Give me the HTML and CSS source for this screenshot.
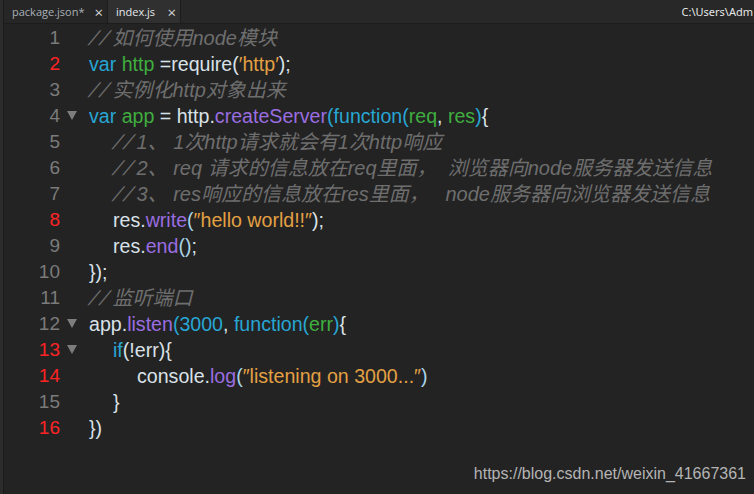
FILE: index.html
```html
<!DOCTYPE html>
<html lang="zh-CN">
<head>
<meta charset="utf-8">
<title>index.js</title>
<link rel="stylesheet" href="styles.css">
</head>
<body>
<div class="window">
  <div class="side"></div>
  <div class="main">
    <div class="tabbar">
      <div class="tab">package.json*<span class="x">×</span></div>
      <div class="tab active">index.js<span class="x">×</span></div>
      <div class="spacer"></div>
      <div class="path">C:\Users\Adm</div>
    </div>
    <div class="editor">
      <div class="line"><span class="ln">1</span><span class="fold"></span><span class="code"><span class="c"><span class="sl">//</span>如何使用node模块</span></span></div>
      <div class="line"><span class="ln red">2</span><span class="fold"></span><span class="code"><span class="k">var</span> <span class="v">http</span> =require(<span class="s">′http′</span>);</span></div>
      <div class="line"><span class="ln">3</span><span class="fold"></span><span class="code"><span class="c"><span class="sl">//</span>实例化http对象出来</span></span></div>
      <div class="line"><span class="ln">4</span><span class="fold"><i class="tri"></i></span><span class="code"><span class="k">var</span> <span class="v">app</span> = http.<span class="m">createServer</span><span class="k">(function(</span><span class="v">req</span>, <span class="v">res</span><span class="k">)</span>{</span></div>
      <div class="line"><span class="ln">5</span><span class="fold"></span><span class="code i1"><span class="c"><span class="sl">//</span>1、 1次http请求就会有1次http响应</span></span></div>
      <div class="line"><span class="ln">6</span><span class="fold"></span><span class="code i1"><span class="c"><span class="sl">//</span>2、 req 请求的信息放在req里面，  浏览器向node服务器发送信息</span></span></div>
      <div class="line"><span class="ln">7</span><span class="fold"></span><span class="code i1"><span class="c"><span class="sl">//</span>3、 res响应的信息放在res里面，   node服务器向浏览器发送信息</span></span></div>
      <div class="line"><span class="ln red">8</span><span class="fold"></span><span class="code i1">res.<span class="m">write</span><span class="p">(</span><span class="s">″hello world!!″</span>);</span></div>
      <div class="line"><span class="ln">9</span><span class="fold"></span><span class="code i1">res.<span class="m">end</span><span class="p">()</span>;</span></div>
      <div class="line"><span class="ln">10</span><span class="fold"></span><span class="code">});</span></div>
      <div class="line"><span class="ln">11</span><span class="fold"></span><span class="code"><span class="c"><span class="sl">//</span>监听端口</span></span></div>
      <div class="line"><span class="ln">12</span><span class="fold"><i class="tri"></i></span><span class="code">app.<span class="m">listen</span><span class="k">(3000</span>, <span class="k">function(</span><span class="v">err</span><span class="k">)</span>{</span></div>
      <div class="line"><span class="ln red">13</span><span class="fold"><i class="tri"></i></span><span class="code i1"><span class="k">if</span>(!err){</span></div>
      <div class="line"><span class="ln red">14</span><span class="fold"></span><span class="code i2">console.<span class="m">log</span><span class="p">(</span><span class="s">″listening on 3000...″</span><span class="p">)</span></span></div>
      <div class="line"><span class="ln">15</span><span class="fold"></span><span class="code i1">}</span></div>
      <div class="line"><span class="ln red">16</span><span class="fold"></span><span class="code">})</span></div>
    </div>
    <div class="watermark">https://blog.csdn.net/weixin_41667361</div>
  </div>
</div>
</body>
</html>
```
FILE: styles.css
```css
* { box-sizing: border-box; }
html, body {
  margin: 0;
  padding: 0;
  background: #232323;
  overflow: hidden;
}
.window {
  display: flex;
  width: 754px;
  height: 494px;
}
.side {
  width: 4px;
  flex: none;
  background: #2c2c2c;
  border-right: 1px solid #1b1b1b;
}
.main {
  flex: 1;
  display: flex;
  flex-direction: column;
  min-width: 0;
  position: relative;
}
.tabbar {
  display: flex;
  height: 24px;
  background: #282828;
  border-bottom: 1px solid #1c1c1c;
  font-family: "Open Sans", "Noto Sans", sans-serif;
  font-size: 11px;
  color: #a9b0b6;
  white-space: nowrap;
}
.tab {
  display: flex;
  align-items: center;
  padding: 0 0 0 8px;
  height: 23px;
  border-right: 1px solid #1c1c1c;
  background: #262626;
}
.tab:first-child { width: 104px; }
.tab.active {
  width: 73px;
  background: #303030;
  color: #e4e8ec;
}
.tab .x {
  margin-left: auto;
  margin-right: 4px;
  font-size: 15px;
  color: #d4d4d4;
}
.spacer { flex: 1; }
.path {
  align-self: center;
  color: #e6e6e6;
  font-size: 11px;
  font-family: "Noto Sans", "Open Sans", sans-serif;
  padding-right: 1px;
}
.editor {
  padding-top: 1px;
  font-family: "Liberation Sans", "Noto Sans CJK SC", sans-serif;
  font-size: 19.6px;
  color: #d9e1e8;
}
.line {
  display: flex;
  height: 26px;
  line-height: 26px;
  white-space: pre;
}
.ln {
  width: 56px;
  text-align: right;
  color: #7b7b7b;
  flex: none;
  font-size: 19px;
}
.ln.red { color: #ff2424; }
.fold {
  width: 29px;
  flex: none;
  display: flex;
  align-items: center;
  padding-left: 7px;
}
.tri {
  width: 0;
  height: 0;
  border-left: 5px solid transparent;
  border-right: 5px solid transparent;
  border-top: 9px solid #7d7d7d;
  margin-top: -2px;
}
.code.i1 { padding-left: 24px; }
.code.i2 { padding-left: 48px; }
.c { color: #6e6e6e; font-style: italic; font-size: 20px; }
.sl {
  display: inline-block;
  width: 23.5px;
  padding-left: 2px;
  letter-spacing: 5px;
  font-size: 20.5px;
  transform: skewX(-20deg);
}
.k { color: #27a6d3; }
.p { color: #a9d4e8; }
.v { color: #3fae3f; }
.s { color: #e3a043; }
.m { color: #9a6de0; }
.watermark {
  position: absolute;
  right: 8px;
  bottom: 11px;
  font-family: "Liberation Sans", sans-serif;
  font-size: 16px;
  color: #b4b4b4;
}
```
